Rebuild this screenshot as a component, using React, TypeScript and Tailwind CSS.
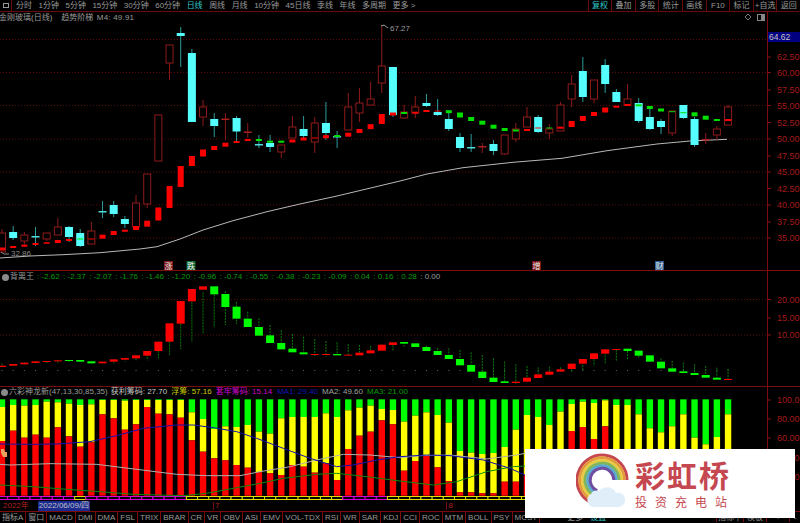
const candleX = (i: number) => 2 + 11.17 * i;

// kind, wick top, body top, body bottom, wick bottom (page pixels)
type Candle = ["r" | "c", number, number, number, number];
const candles: Candle[] = [
  ["r", 229, 233, 252, 252], ["c", 226, 232, 238, 240], ["r", 232, 235, 241, 247], ["c", 227, 236, 237.5, 246],
  ["r", 233, 233, 239, 241], ["r", 218, 227, 235, 235], ["c", 226, 227, 237, 242], ["c", 229, 233, 246, 247],
  ["r", 222, 231, 244, 244], ["c", 201, 211, 212, 218], ["c", 201, 205, 214, 217], ["c", 216, 219, 224, 228],
  ["r", 195, 203, 227, 227], ["r", 174, 174, 204, 208], ["r", 115, 115, 161, 161], ["r", 45, 45, 63, 80],
  ["c", 27, 33, 36, 67], ["c", 49, 53, 122, 122], ["r", 100, 107, 117, 126], ["c", 113, 119, 126, 137],
  ["r", 113, 118.5, 119.5, 140], ["c", 116, 118, 131.5, 142], ["r", 123, 131.5, 132.5, 138], ["c", 135, 144, 145, 148],
  ["c", 135, 143, 147, 152], ["r", 145, 145, 152, 158], ["r", 116, 127, 138, 138], ["c", 116, 129, 136, 139],
  ["r", 117, 123, 142, 153], ["c", 102, 123, 133, 140], ["c", 131, 136, 137, 148], ["r", 93, 107, 130, 130],
  ["r", 88, 103, 113, 122], ["r", 82, 99, 105, 105], ["r", 26, 66, 83, 93], ["c", 67, 67, 115, 117],
  ["r", 105, 112, 118, 119], ["r", 96, 107, 113, 118], ["c", 94, 103, 106, 107], ["c", 99, 112, 115, 116],
  ["c", 113, 119, 129, 131], ["c", 133, 137, 148, 152], ["c", 134, 147, 148, 152], ["r", 143, 146, 147, 153],
  ["c", 140, 144, 151, 155], ["r", 135, 135, 154, 155], ["r", 123, 129, 139, 142], ["r", 107, 117, 127, 127],
  ["c", 115, 117, 132, 133], ["r", 124, 129, 133, 139], ["r", 102, 105, 131, 131], ["r", 75, 84, 99, 107],
  ["c", 57, 71, 97, 102], ["r", 80, 80, 99, 103], ["c", 59, 65, 84, 93], ["c", 89, 92, 102, 102],
  ["r", 84, 99, 105, 105], ["c", 98, 103, 121, 123], ["c", 108, 117, 129, 130], ["c", 119, 121, 127, 134],
  ["r", 111, 111, 133, 136], ["c", 105, 105, 118, 119], ["c", 117, 119, 145, 147], ["r", 133, 139, 140, 144],
  ["r", 126, 129, 135, 140], ["r", 105, 107, 125, 125],
];

// thick stepped line over the candles: center y, height, color
const stepLine: [number, number, "r" | "g"][] = [
  [249, 3, "r"], [247, 2, "r"], [245.7, 2, "r"], [244, 2, "r"], [243, 1.5, "r"], [241.5, 3, "r"], [240, 2, "r"], [239, 1, "g"],
  [239, 1, "r"], [236.7, 4, "r"], [233, 4, "r"], [230.7, 2, "r"], [228, 4, "r"], [223.7, 6, "r"], [214, 13, "r"], [197, 22, "r"],
  [176.5, 21, "r"], [161, 10, "r"], [153, 7, "r"], [148, 4, "r"], [144.7, 4, "r"], [142, 2, "r"], [140, 2, "r"], [140, 2, "g"],
  [141.7, 2, "g"], [141.7, 2, "g"], [141, 3, "r"], [139, 3, "r"], [138, 1, "r"], [136.7, 3, "r"], [136, 2, "g"], [134.7, 4, "r"],
  [131, 4, "r"], [126.7, 5, "r"], [119, 10, "r"], [114, 3, "r"], [113, 2, "g"], [112.7, 2, "r"], [111, 2, "r"], [111, 1, "r"],
  [111.7, 3, "g"], [115, 5, "g"], [119, 4, "g"], [122.7, 4, "g"], [126.7, 4, "g"], [129.5, 3, "g"], [130.5, 2, "g"], [130, 2, "r"],
  [128, 1, "r"], [128, 1, "g"], [127.7, 2, "r"], [124, 6, "r"], [118.5, 5, "r"], [114, 4, "r"], [110, 5, "r"], [106.7, 2, "r"],
  [105, 2, "r"], [105.3, 2, "g"], [107.5, 3, "g"], [110, 3, "g"], [111.7, 1, "g"], [112.7, 1, "g"], [114.3, 4, "g"], [117.7, 4, "g"],
  [120, 2, "g"], [120, 2, "r"],
];

const avgLine = "0,258 30,256 63,254.7 100,252.7 140,249 157,246.7 180,239 203,230 233,220.7 267,211.7 300,204 337,196 400,181 427,174 463,167.7 513,162.3 562,158.3 607,150.7 657,144 690,141 727,139.3";

// indicator bodies: top, bottom, color (zoomed values, y = 255 + v / 3)
const macdBars: [number, number, "r" | "g"][] = [
  [332, 336, "r"], [327, 332, "r"], [323, 328, "r"], [319, 324, "r"], [318, 321, "r"], [316, 318, "r"], [315, 317, "g"], [315, 320, "g"],
  [319, 325, "g"], [320, 325, "r"], [313, 320, "r"], [309, 314, "r"], [301, 310, "r"], [288, 302, "r"], [260, 288, "r"], [205, 260, "r"],
  [138, 206, "r"], [102, 139, "r"], [94, 104, "r"], [94, 118, "g"], [117, 156, "g"], [155, 191, "g"], [191, 216, "g"], [216, 242, "g"],
  [241, 264, "g"], [264, 283, "g"], [281, 292, "g"], [292, 298, "g"], [297, 299, "r"], [297, 299, "r"], [297, 301, "g"], [299, 301, "r"],
  [293, 301, "r"], [286, 295, "r"], [269, 287, "r"], [262, 270, "r"], [261, 266, "g"], [265, 276, "g"], [276, 288, "g"], [288, 300, "g"],
  [300, 312, "g"], [312, 331, "g"], [330, 350, "g"], [350, 369, "g"], [368, 381, "g"], [379, 384, "g"], [380, 384, "r"], [368, 380, "r"],
  [358, 369, "r"], [350, 359, "r"], [343, 350, "r"], [326, 342, "r"], [312, 326, "r"], [295, 312, "r"], [283, 296, "r"], [282, 284, "r"],
  [281, 288, "g"], [287, 302, "g"], [301, 320, "g"], [320, 340, "g"], [340, 350, "g"], [349, 354, "g"], [354, 360, "g"], [360, 368, "g"],
  [368, 374, "g"], [372, 374, "r"],
];
const macdWicks: [number, number][] = [
  [325, 332], [327, 332], [323, 328], [319, 328], [318, 325], [316, 326], [315, 322], [315, 320], [319, 325], [320, 325], [313, 325], [309, 320],
  [301, 318], [288, 316], [260, 310], [205, 300], [206, 282], [140, 260], [112, 236], [118, 218], [108, 210], [140, 207], [170, 191], [190, 216],
  [210, 241], [225, 264], [237, 281], [245, 292], [252, 305], [258, 305], [262, 297], [267, 299], [270, 293], [272, 286], [280, 269], [262, 286],
  [261, 275], [268, 276], [272, 288], [278, 288], [280, 300], [285, 312], [292, 330], [300, 350], [310, 368], [320, 379], [328, 386], [333, 368],
  [337, 358], [335, 350], [337, 350], [326, 350], [312, 345], [295, 333], [283, 325], [284, 320], [288, 315], [302, 310], [300, 301], [310, 320],
  [318, 340], [323, 349], [328, 354], [333, 360], [338, 368], [342, 372],
];

// stacked bars: green end, yellow end (zoomed values, y = 385 + v / 3)
const stackBars: [number, number][] = [
  [66, 168], [60, 137], [62, 158], [60, 149], [50, 158], [52, 127], [56, 154], [60, 185], [58, 172], [45, 88], [45, 100], [47, 134],
  [45, 118], [45, 66], [45, 86], [45, 88], [45, 98], [82, 166], [102, 200], [132, 220], [124, 226], [126, 240], [120, 248], [140, 262],
  [146, 265], [100, 270], [96, 240], [96, 245], [96, 263], [85, 235], [96, 285], [76, 192], [68, 152], [62, 140], [72, 106], [75, 118],
  [110, 257], [92, 228], [82, 212], [90, 247], [113, 288], [198, 322], [203, 322], [207, 325], [204, 325], [186, 290], [134, 290], [90, 270],
  [96, 260], [120, 250], [80, 220], [57, 138], [50, 126], [54, 162], [46, 124], [60, 250], [60, 280], [88, 300], [130, 310], [142, 315],
  [124, 320], [88, 322], [158, 325], [178, 325], [156, 325], [88, 322],
];

const toPts = (pts: number[][], x0: number) => pts.map(([x, y]) => `${x0 + x / 3},${385 + y / 3}`).join(" ");
const blueLine =
  toPts([[0, 177], [100, 178], [170, 177], [270, 170], [350, 152], [430, 130], [530, 120], [580, 120], [640, 128], [710, 140], [770, 160], [850, 190], [930, 220], [1010, 245], [1060, 240], [1130, 225], [1200, 215]], 0) +
  " " + toPts([[80, 210], [150, 212], [250, 225], [330, 250], [375, 270]], 400);
const whiteLine =
  toPts([[0, 238], [30, 240], [150, 236], [290, 238], [370, 248], [450, 258], [530, 268], [620, 272], [720, 272], [780, 260], [870, 245], [950, 225], [1030, 208], [1110, 210], [1200, 218]], 0) +
  " " + toPts([[60, 212], [150, 210], [260, 222], [350, 210], [375, 205]], 400);
const greenLine =
  toPts([[0, 300], [100, 305], [200, 313], [300, 320], [400, 328], [550, 332], [620, 325], [700, 310], [780, 295], [850, 280], [950, 268], [1010, 265], [1100, 275], [1200, 288]], 0) +
  " " + toPts([[100, 300], [170, 290], [260, 260], [340, 245], [375, 243]], 400);

const toolbarLeft = ["分时", "1分钟", "5分钟", "15分钟", "30分钟", "60分钟", "日线", "周线", "月线", "10分钟", "45日线", "季线", "年线", "多周期", "更多 >"];
const toolbarRight = ["复权", "叠加", "多股", "统计", "画线", "F10", "标记", "+自选", "返回"];
const bottomTabs = ["指标A", "窗口", "MACD", "DMI", "DMA", "FSL", "TRIX", "BRAR", "CR", "VR", "OBV", "ASI", "EMV", "VOL-TDX", "RSI", "WR", "SAR", "KDJ", "CCI", "ROC", "MTM", "BOLL", "PSY", "MCST"];
const macdValues = ["-2.62", "-2.37", "-2.07", "-1.76", "-1.46", "-1.20", "-0.96", "-0.74", "-0.55", "-0.38", "-0.23", "-0.09", "0.04", "0.16", "0.28"];

const priceAxis: [string, number][] = [
  ["62.50", 57], ["60.00", 72.5], ["57.50", 90], ["55.00", 105.5], ["52.50", 122.5], ["50.00", 139],
  ["47.50", 156], ["45.00", 172], ["42.50", 188.5], ["40.00", 205], ["37.50", 222], ["35.00", 238],
];

function AxisLabels({ items }: { items: [string, number][] }) {
  return (
    <>
      <line x1="767.5" x2="767.5" y1="0" y2="530" stroke="#7a0c0c" />
      {items.map(([label, y]) => (
        <g key={label}>
          <line x1="767" x2="771" y1={y} y2={y} stroke="#8a1010" />
          <text x="777" y={y + 3} fontSize="9" fill="#a51a1a">
            {label}
          </text>
        </g>
      ))}
    </>
  );
}

function GridLine({ y }: { y: number }) {
  return <line x1="0" x2="767" y1={y} y2={y} stroke="#5a0a0a" strokeDasharray="1 2" />;
}

function Badge({ x, bg, text }: { x: number; bg: string; text: string }) {
  return (
    <g>
      <rect x={x - 4.5} y="261" width="9" height="9" fill={bg} />
      <text x={x} y="268.5" fontSize="8" fill="#eeeeee" textAnchor="middle">
        {text}
      </text>
    </g>
  );
}

function PriceChart() {
  return (
    <svg viewBox="0 12 800 258" className="block h-[258px] w-[800px]">
      {[39.5, 72.5, 105.5, 139, 172, 205, 238].map((y) => (
        <GridLine key={y} y={y} />
      ))}
      <AxisLabels items={priceAxis} />
      <polyline points={avgLine} fill="none" stroke="#b8b8b8" strokeWidth="1" />
      {candles.map(([kind, wt, top, bottom, wb], i) => {
        const x = candleX(i);
        const wick = kind === "r" ? "#8f1a1a" : "#2a9c9c";
        const doji = bottom - top < 2;
        return (
          <g key={i}>
            <line x1={x} x2={x} y1={wt} y2={wb} stroke={wick} />
            {kind === "c" ? (
              <rect x={x - 4} y={top} width="8" height={Math.max(bottom - top, 1.5)} fill={doji ? "#4fdede" : "#55ffff"} />
            ) : doji ? (
              <rect x={x - 4} y={top} width="8" height="1.5" fill="#a82020" />
            ) : (
              <rect x={x - 3.5} y={top} width="7" height={bottom - top} fill="#000" stroke="#8f1a1a" />
            )}
          </g>
        );
      })}
      {stepLine.map(([y, h, color], i) => (
        <rect key={i} x={candleX(i) - 3} y={y - h / 2} width="6" height={h} fill={color === "r" ? "#ff0000" : "#00e000"} />
      ))}
      <polyline points="381,26 384,25 388,28" fill="none" stroke="#999" />
      <text x="390" y="31" fontSize="8" fill="#9a9a9a">
        67.27
      </text>
      <polyline points="1,252 4,254 9,254" fill="none" stroke="#888" />
      <text x="11" y="256" fontSize="8" fill="#8a8a8a">
        32.86
      </text>
      <path d="M748 14 l3 3 -3 3 -3 -3 z" fill="none" stroke="#777" />
      <rect x="757.5" y="14.5" width="7" height="6" fill="none" stroke="#888" />
      <rect x="761" y="15" width="3" height="5" fill="#888" />
      <rect x="768" y="32" width="32" height="10" fill="#000080" />
      <text x="769" y="40" fontSize="8.5" fill="#c8c8c8">
        64.62
      </text>
      <Badge x={168.5} bg="#7a1414" text="涨" />
      <Badge x={191} bg="#0f6a34" text="跌" />
      <Badge x={536.5} bg="#7a1414" text="增" />
      <Badge x={659.5} bg="#2a5a8c" text="财" />
    </svg>
  );
}

function MacdChart() {
  const y = (v: number) => 255 + v / 3;
  return (
    <svg viewBox="0 271 800 115" className="block h-[115px] w-[800px]">
      <GridLine y={299.5} />
      <GridLine y={335} />
      <AxisLabels items={[["20.00", 299.5], ["15.00", 318], ["10.00", 335]]} />
      {macdBars.map((_, i) => (
        <rect key={i} x={candleX(i) - 0.5} y="370" width="1" height="1" fill="#666" />
      ))}
      {macdWicks.map(([a, b], i) => (
        <line key={i} x1={candleX(i)} x2={candleX(i)} y1={y(a)} y2={y(b)} stroke="#0a7a0a" strokeDasharray="2 1" />
      ))}
      {macdBars.map(([a, b, color], i) => (
        <rect key={i} x={candleX(i) - 4} y={y(a)} width="8" height={Math.max(y(b) - y(a), 1)} fill={color === "r" ? "#ff0000" : "#00ff00"} />
      ))}
    </svg>
  );
}

function StackChart() {
  const y = (v: number) => 385 + v / 3;
  const isYellow = (i: number) => i === 7 || (i >= 17 && i <= 30) || i >= 35;
  return (
    <svg viewBox="0 387 800 114" className="block h-[114px] w-[800px]">
      <AxisLabels items={[["100.0", 400], ["80.00", 419], ["60.00", 438], ["40.00", 458], ["20.00", 477]]} />
      {stackBars.map(([g, r], i) => {
        const x = candleX(i) - 3.2;
        return (
          <g key={i}>
            <rect x={x} y={y(43)} width="6.4" height={y(g) - y(43)} fill="#00ff00" />
            <rect x={x} y={y(g)} width="6.4" height={y(r) - y(g)} fill="#ffff00" />
            <rect x={x} y={y(r)} width="6.4" height={y(332) - y(r)} fill="#ff0000" />
            <rect
              x={candleX(i) - 5.5}
              y="496.5"
              width="11.17"
              height="3"
              fill="#000"
              stroke={isYellow(i) ? "#e0e000" : "#d800d8"}
            />
          </g>
        );
      })}
      <polyline points={greenLine} fill="none" stroke="#0a8a0a" />
      <polyline points={whiteLine} fill="none" stroke="#b0b0b0" />
      <polyline points={blueLine} fill="none" stroke="#1010b0" />
      <path d="M1 449 l3 0 1 3 2 0 0 5 -4 0 -2 -4 z" fill="#e8a060" />
    </svg>
  );
}

function RoundIcon() {
  return <span className="h-[7px] w-[7px] shrink-0 rounded-full bg-[#8a8a8a]" />;
}

function RainbowLogo() {
  const arcs: [number, string][] = [
    [25, "#c5474f"],
    [22.3, "#e49a3c"],
    [19.6, "#e6cb45"],
    [16.9, "#7fb65c"],
    [14.2, "#5aa9d2"],
    [11.8, "#6f4ea0"],
  ];
  return (
    <svg viewBox="0 0 62 62" className="h-[62px] w-[62px] shrink-0">
      {arcs.map(([r, color]) => (
        <path
          key={r}
          d={`M${26 + r} 27 A${r} ${r} 0 1 0 ${26 - r * 0.4} ${27 + r * 0.92}`}
          fill="none"
          stroke={color}
          strokeWidth="3"
        />
      ))}
      <path
        d="M17 54 a7 7 0 0 1 -2 -13 a6 6 0 0 1 8 -3 a10 10 0 0 1 17 2 a7 7 0 0 1 9 6 a7 7 0 0 1 -6 8 z"
        fill="#dfeef8"
      />
    </svg>
  );
}

export default function App() {
  return (
    <div
      className="relative flex h-[523px] w-[800px] flex-col overflow-hidden bg-black text-[8px] leading-none text-[#9a9a9a]"
      style={{ fontFamily: '"Liberation Sans", "Noto Sans CJK SC", sans-serif' }}
    >
      {/* top toolbar */}
      <div className="flex h-[12px] shrink-0 items-center justify-between border-b border-[#6b0a0a]">
        <div className="flex h-full items-center">
          <div className="flex h-full w-[12px] items-center justify-center border-r border-[#6b0a0a]">
            <span className="h-[5px] w-[6px] border border-[#999]" />
          </div>
          <div className="ml-[4px] flex gap-[6.5px] whitespace-nowrap">
            {toolbarLeft.map((t) => (
              <span key={t} className={t === "日线" ? "text-[#2fc8c8]" : ""}>
                {t}
              </span>
            ))}
          </div>
        </div>
        <div className="flex h-full">
          {toolbarRight.map((t) => (
            <span
              key={t}
              className={`flex h-full w-[23.6px] items-center justify-center border-l border-[#6b0a0a] whitespace-nowrap ${t === "复权" ? "text-[#2fc8c8]" : ""}`}
            >
              {t}
            </span>
          ))}
        </div>
      </div>

      {/* price panel */}
      <div className="relative shrink-0 border-b border-[#7a0c0c]">
        <PriceChart />
        <div className="absolute top-[2px] left-0 flex items-center gap-[1.5px] whitespace-nowrap">
          <span className="-ml-[1px]">金刚玻璃(日线)</span>
          <span className="ml-[5px]"><RoundIcon /></span>
          <span className="ml-[1px]">趋势阶梯</span>
          <span className="ml-[2px] tracking-[0.2px]">M4: 49.91</span>
        </div>
      </div>

      {/* indicator panel */}
      <div className="relative shrink-0 border-b border-[#7a0c0c]">
        <MacdChart />
        <div className="absolute top-[2px] left-[2px] flex items-center whitespace-nowrap">
          <RoundIcon />
          <span className="ml-[1px]">背离王</span>
          <div className="ml-[3px] flex gap-[3.4px] text-[#0a9a0a]">
            {macdValues.map((v) => (
              <span key={v}>: {v}</span>
            ))}
            <span className="text-[#9a9a9a]">: 0.00</span>
          </div>
        </div>
      </div>

      {/* stacked chips panel */}
      <div className="relative shrink-0">
        <StackChart />
        <div className="absolute top-[1px] left-[1px] flex items-center whitespace-nowrap">
          <RoundIcon />
          <span className="ml-[1px]">六彩神龙新(47,13,30,85,35)</span>
          <span className="ml-[3px] text-[#c8c8c8]">获利筹码: 27.70</span>
          <span className="ml-[4px] text-[#c8c800]">浮筹: 57.16</span>
          <span className="ml-[4px] text-[#d000d0]">套牢筹码: 15.14</span>
          <span className="ml-[5px] text-[#1414b8]">MA1: 29.40</span>
          <span className="ml-[4px] text-[#a0a0a0]">MA2: 49.60</span>
          <span className="ml-[4px] text-[#0a9a0a]">MA3: 21.00</span>
        </div>
      </div>

      {/* date row */}
      <div className="flex h-[11px] shrink-0 items-center border-b border-[#7a0c0c] pl-[3px] whitespace-nowrap">
        <span className="w-[35px] text-[#b02020]">2022年</span>
        <span className="flex h-[10px] w-[52px] items-center justify-center bg-[#1a2a90] text-[#c0c0c0]">2022/06/09/四</span>
        <span className="ml-[123px] border-l border-[#7a0c0c] pl-[1px] text-[#b02020]">7</span>
        <span className="ml-[227px] border-l border-[#7a0c0c] pl-[1px] text-[#b02020]">8</span>
      </div>

      {/* bottom tabs */}
      <div className="flex h-[11px] shrink-0 items-center justify-between whitespace-nowrap">
        <div className="flex h-full items-center">
          {bottomTabs.map((t) => (
            <span key={t} className="flex h-full items-center border-r border-[#7a0c0c] px-[2px]">
              {t}
            </span>
          ))}
          <span className="ml-[27px]">更多</span>
          <span className="ml-[7px] text-[#2fc8c8]">设置</span>
        </div>
        <div className="flex h-full items-center">
          <span className="border-x border-[#7a0c0c] px-[1px]">指标中</span>
          <span className="border-r border-[#7a0c0c] px-[3px]">模板</span>
          <span className="w-[23px] border-r border-[#7a0c0c] text-center">+</span>
          <span className="w-[10px] text-center">-</span>
        </div>
      </div>

      {/* watermark */}
      <div className="absolute top-[449px] left-[525px] flex h-[69px] w-[270px] items-center bg-white pl-[51px]">
        <RainbowLogo />
        <div className="-ml-[3px] flex flex-col items-start font-bold text-[#c5474f]">
          <span className="mt-[3px] text-[30px] leading-[32px] tracking-[2px]">彩虹桥</span>
          <span className="mt-[4px] text-[12px] leading-[12px] font-normal tracking-[8px]">投资充电站</span>
        </div>
      </div>
    </div>
  );
}
